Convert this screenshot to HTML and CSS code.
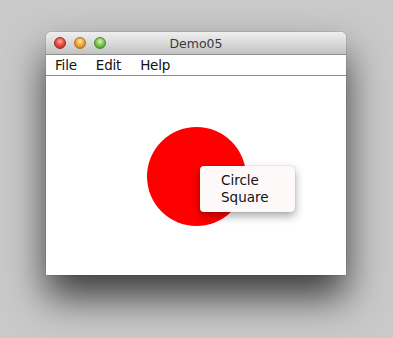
FILE: index.html
```html
<!DOCTYPE html>
<html lang="en">
<head>
    <meta charset="UTF-8">
    <title>Demo05</title>
    <link rel="stylesheet" href="styles.css">
</head>
<body>
    <div class="window">
        <div class="titlebar">
            <div class="lights">
                <span class="light red"></span>
                <span class="light yellow"></span>
                <span class="light green"></span>
            </div>
            <div class="title">Demo05</div>
        </div>
        <div class="menubar">
            <span class="menu">File</span>
            <span class="menu">Edit</span>
            <span class="menu">Help</span>
        </div>
        <div class="canvas">
            <div class="circle"></div>
            <div class="popup">
                <div class="item">Circle</div>
                <div class="item">Square</div>
            </div>
        </div>
    </div>
</body>
</html>
```

FILE: styles.css
```css
body {
    margin: 0;
    padding: 32px 0 0 46px;
    height: 338px;
    box-sizing: border-box;
    background-color: #c9c9c9;
    font-family: "Lucida Grande", "DejaVu Sans", sans-serif;
    overflow: hidden;
}
.window {
    width: 300px;
    background: white;
    border-radius: 5px 5px 0 0;
    box-shadow: 0 22px 38px rgba(0,0,0,0.7), 0 0 1px rgba(0,0,0,0.7);
}
.titlebar {
    height: 22px;
    position: relative;
    display: flex;
    align-items: center;
    justify-content: center;
    background: linear-gradient(to bottom, #efefef 0%, #dadada 50%, #c2c2c2 100%);
    border-radius: 5px 5px 0 0;
    border-bottom: 1px solid #8c8c8c;
}
.lights {
    position: absolute;
    left: 8px;
    top: 5px;
    display: flex;
    gap: 8px;
}
.light {
    width: 12px;
    height: 12px;
    border-radius: 50%;
    box-sizing: border-box;
}
.red {
    background: radial-gradient(circle at 50% 35%, #ffb0a8 0%, #e8483d 50%, #a8231c 100%);
    border: 1px solid #9c2b24;
}
.yellow {
    background: radial-gradient(circle at 50% 35%, #ffe8a6 0%, #eda43a 50%, #b07113 100%);
    border: 1px solid #a8721e;
}
.green {
    background: radial-gradient(circle at 50% 35%, #d9f4b8 0%, #7cc34c 50%, #3d8a20 100%);
    border: 1px solid #4b8a2d;
}
.title {
    font-size: 12.5px;
    color: #3a3a3a;
}
.menubar {
    height: 20px;
    display: flex;
    align-items: center;
    padding-left: 9px;
    border-bottom: 1px solid #8a8a8a;
    font-size: 13.5px;
    letter-spacing: -0.2px;
    color: #111;
}
.menu {
    margin-right: 19px;
}
.canvas {
    height: 199px;
    position: relative;
}
.circle {
    position: absolute;
    left: 101px;
    top: 51px;
    width: 99px;
    height: 99px;
    border-radius: 50%;
    background: #ff0000;
}
.popup {
    position: absolute;
    left: 154px;
    top: 90px;
    width: 95px;
    height: 46px;
    box-sizing: border-box;
    padding: 6px 0 0 21px;
    background: #fdf9f9;
    border-radius: 4px;
    box-shadow: 0 4px 10px rgba(0,0,0,0.35), 0 0 1px rgba(0,0,0,0.4);
    font-size: 13.5px;
    line-height: 17px;
    color: #111;
}
```
